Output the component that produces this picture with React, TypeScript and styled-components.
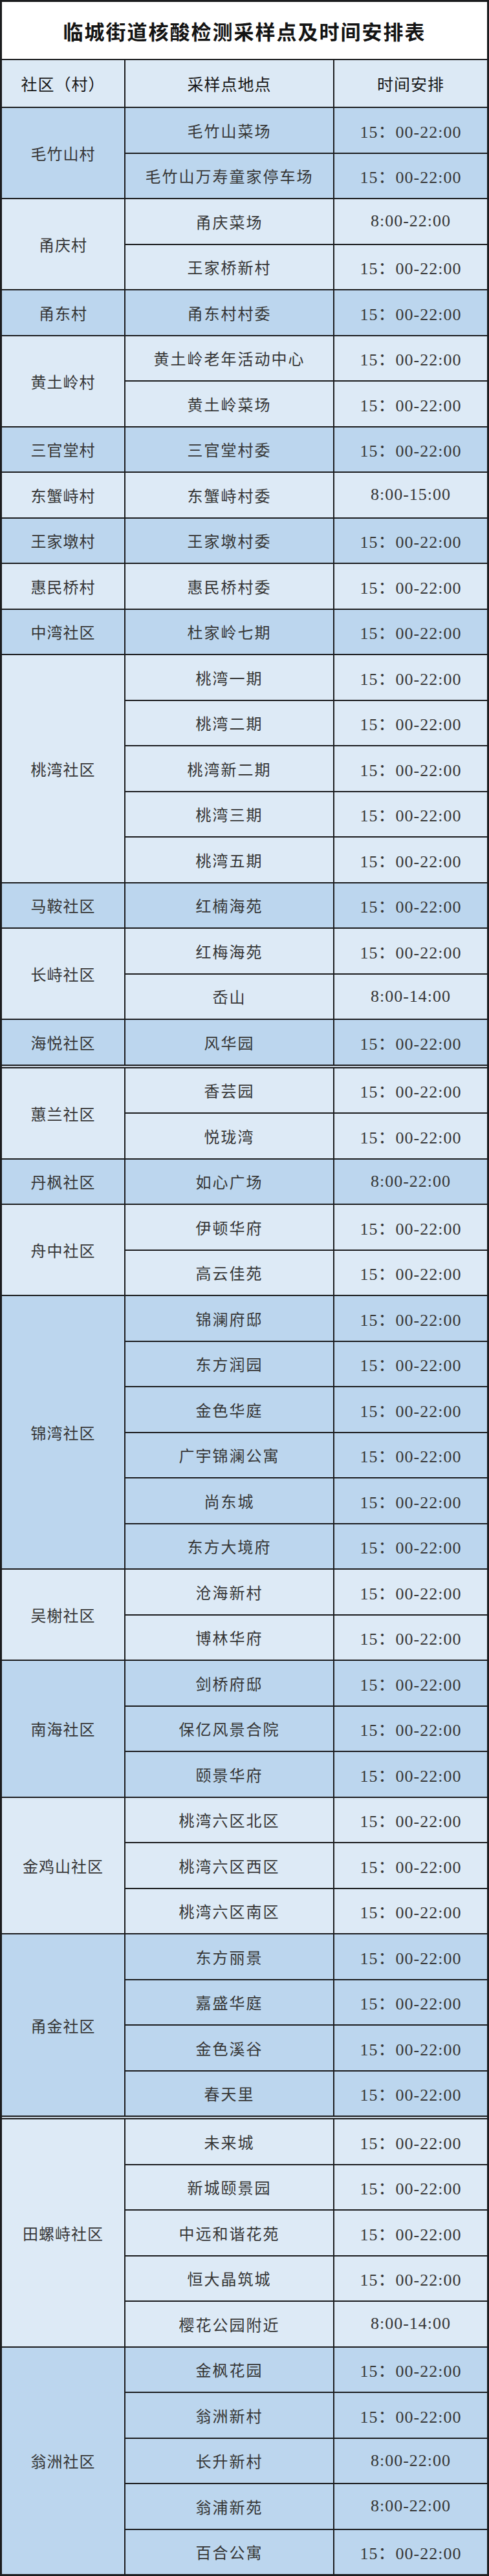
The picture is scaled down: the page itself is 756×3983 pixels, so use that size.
import { Fragment } from "react";
import styled, { createGlobalStyle } from "styled-components";

type Tone = "dark" | "light";

interface Group {
  name: string;
  tone: Tone;
  sites: [string, string][];
}

const LATE = "15：00-22:00";
const DAY = "8:00-22:00";

const sections: Group[][] = [
  [
    { name: "毛竹山村", tone: "dark", sites: [["毛竹山菜场", LATE], ["毛竹山万寿童家停车场", LATE]] },
    { name: "甬庆村", tone: "light", sites: [["甬庆菜场", DAY], ["王家桥新村", LATE]] },
    { name: "甬东村", tone: "dark", sites: [["甬东村村委", LATE]] },
    { name: "黄土岭村", tone: "light", sites: [["黄土岭老年活动中心", LATE], ["黄土岭菜场", LATE]] },
    { name: "三官堂村", tone: "dark", sites: [["三官堂村委", LATE]] },
    { name: "东蟹峙村", tone: "light", sites: [["东蟹峙村委", "8:00-15:00"]] },
    { name: "王家墩村", tone: "dark", sites: [["王家墩村委", LATE]] },
    { name: "惠民桥村", tone: "light", sites: [["惠民桥村委", LATE]] },
    { name: "中湾社区", tone: "dark", sites: [["杜家岭七期", LATE]] },
    {
      name: "桃湾社区",
      tone: "light",
      sites: [["桃湾一期", LATE], ["桃湾二期", LATE], ["桃湾新二期", LATE], ["桃湾三期", LATE], ["桃湾五期", LATE]],
    },
    { name: "马鞍社区", tone: "dark", sites: [["红楠海苑", LATE]] },
    { name: "长峙社区", tone: "light", sites: [["红梅海苑", LATE], ["岙山", "8:00-14:00"]] },
    { name: "海悦社区", tone: "dark", sites: [["风华园", LATE]] },
  ],
  [
    { name: "蕙兰社区", tone: "light", sites: [["香芸园", LATE], ["悦珑湾", LATE]] },
    { name: "丹枫社区", tone: "dark", sites: [["如心广场", DAY]] },
    { name: "舟中社区", tone: "light", sites: [["伊顿华府", LATE], ["高云佳苑", LATE]] },
    {
      name: "锦湾社区",
      tone: "dark",
      sites: [
        ["锦澜府邸", LATE],
        ["东方润园", LATE],
        ["金色华庭", LATE],
        ["广宇锦澜公寓", LATE],
        ["尚东城", LATE],
        ["东方大境府", LATE],
      ],
    },
    { name: "吴榭社区", tone: "light", sites: [["沧海新村", LATE], ["博林华府", LATE]] },
    { name: "南海社区", tone: "dark", sites: [["剑桥府邸", LATE], ["保亿风景合院", LATE], ["颐景华府", LATE]] },
    {
      name: "金鸡山社区",
      tone: "light",
      sites: [["桃湾六区北区", LATE], ["桃湾六区西区", LATE], ["桃湾六区南区", LATE]],
    },
    {
      name: "甬金社区",
      tone: "dark",
      sites: [["东方丽景", LATE], ["嘉盛华庭", LATE], ["金色溪谷", LATE], ["春天里", LATE]],
    },
  ],
  [
    {
      name: "田螺峙社区",
      tone: "light",
      sites: [
        ["未来城", LATE],
        ["新城颐景园", LATE],
        ["中远和谐花苑", LATE],
        ["恒大晶筑城", LATE],
        ["樱花公园附近", "8:00-14:00"],
      ],
    },
    {
      name: "翁洲社区",
      tone: "dark",
      sites: [["金枫花园", LATE], ["翁洲新村", LATE], ["长升新村", DAY], ["翁浦新苑", DAY], ["百合公寓", LATE]],
    },
  ],
];

const GlobalStyle = createGlobalStyle`
  html, body {
    margin: 0;
    padding: 0;
    background: #ffffff;
  }
  body {
    font-family: "Noto Sans CJK SC", "Noto Sans", sans-serif;
  }
`;

const Sheet = styled.div`
  width: 756px;
  box-sizing: border-box;
  border: 3px solid #1b1c1e;
  background: #1b1c1e;
  display: flex;
  flex-direction: column;
  gap: 2px;
`;

const Title = styled.h1`
  margin: 0;
  height: 88px;
  background: #ffffff;
  display: flex;
  align-items: center;
  justify-content: center;
  font-family: "Noto Sans CJK SC", sans-serif;
  font-size: 31px;
  font-weight: 700;
  letter-spacing: 2px;
  color: #141414;
`;

const Columns = styled.div`
  display: grid;
  grid-template-columns: 189px 321px 1fr;
  gap: 2px;
`;

const HeaderRow = styled(Columns)`
  height: 72px;
`;

const HeadCell = styled.div`
  background: #dce9f5;
  display: flex;
  align-items: center;
  justify-content: center;
  font-family: "Noto Sans CJK SC", sans-serif;
  font-size: 25px;
  color: #161616;
  letter-spacing: 1px;
`;

const Section = styled(Columns)`
  grid-auto-rows: 68.5px;
`;

const SectionBreak = styled.div`
  height: 2px;
  background: #c6d1dc;
`;

const Cell = styled.div<{ $tone: Tone }>`
  background: ${(p) => (p.$tone === "dark" ? "#bcd6ee" : "#ddeaf6")};
  display: flex;
  align-items: center;
  justify-content: center;
  color: #363636;
`;

const Community = styled(Cell)<{ $span: number }>`
  grid-column: 1;
  grid-row: span ${(p) => p.$span};
  font-size: 24px;
  letter-spacing: 1px;
`;

const Place = styled(Cell)`
  grid-column: 2;
  font-size: 24px;
  letter-spacing: 2px;
`;

const Time = styled(Cell)`
  grid-column: 3;
  font-family: "Liberation Serif", "Noto Sans CJK SC", serif;
  font-size: 26px;
  letter-spacing: 1px;
`;

function GroupRows({ group }: { group: Group }) {
  return (
    <>
      <Community $tone={group.tone} $span={group.sites.length}>
        {group.name}
      </Community>
      {group.sites.map(([place, time]) => (
        <Fragment key={place}>
          <Place $tone={group.tone}>{place}</Place>
          <Time $tone={group.tone}>{time}</Time>
        </Fragment>
      ))}
    </>
  );
}

export default function App() {
  return (
    <>
      <GlobalStyle />
      <Sheet>
        <Title>临城街道核酸检测采样点及时间安排表</Title>
        <HeaderRow>
          <HeadCell>社区（村）</HeadCell>
          <HeadCell>采样点地点</HeadCell>
          <HeadCell>时间安排</HeadCell>
        </HeaderRow>
        {sections.map((groups, i) => (
          <Fragment key={i}>
            {i > 0 && <SectionBreak />}
            <Section>
              {groups.map((g) => (
                <GroupRows key={g.name} group={g} />
              ))}
            </Section>
          </Fragment>
        ))}
      </Sheet>
    </>
  );
}
